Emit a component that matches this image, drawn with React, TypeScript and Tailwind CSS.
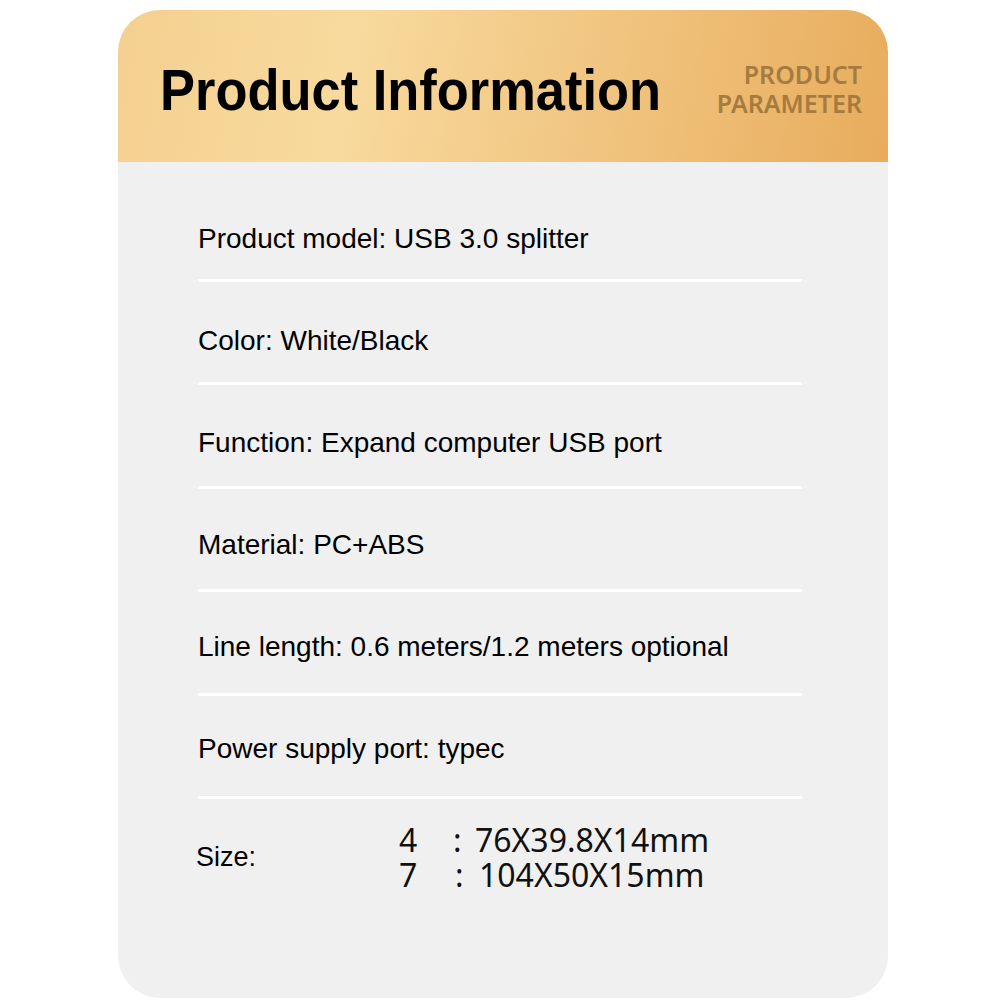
import React from 'react';

// padding under each line grows a little: text pitch is 102px, divider pitch 103.4px
const specs = [
  { text: 'Product model: USB 3.0 splitter', pb: 'pb-[26px]' },
  { text: 'Color: White/Black', pb: 'pb-[27.4px]' },
  { text: 'Function: Expand computer USB port', pb: 'pb-[28.8px]' },
  { text: 'Material: PC+ABS', pb: 'pb-[30.2px]' },
  { text: 'Line length: 0.6 meters/1.2 meters optional', pb: 'pb-[31.6px]' },
  { text: 'Power supply port: typec', pb: 'pb-[33px]' },
];

const sizes = [
  { port: '4', value: '76X39.8X14mm', colonPad: 'pl-0', valuePad: 'pl-0' },
  { port: '7', value: '104X50X15mm', colonPad: 'pl-[2px]', valuePad: 'pl-[4px]' },
];

const App: React.FC = () => {
  return (
    <div className="w-[1000px] h-[1000px] bg-white pt-[10px] pl-[118px]">
      <div className="w-[770px] h-[988px] rounded-[42px] bg-[#f0f0f0] overflow-hidden flex flex-col">
        {/* Header */}
        <div className="h-[152px] shrink-0 flex items-center justify-between pl-[42px] pr-[26px] bg-linear-[100deg] from-[#f4d090] via-[#f8da9e] via-30% to-[#e8ac5d]">
          <h1
            className="text-[57px] leading-none font-bold text-black scale-x-[0.92] origin-left whitespace-nowrap mt-[8px]"
            style={{ fontFamily: '"Liberation Sans", Arial, sans-serif' }}
          >
            Product Information
          </h1>
          <div
            className="text-right text-[25px] leading-[29px] font-semibold text-[#a67b3f] mt-[5px]"
            style={{ fontFamily: '"Noto Sans", sans-serif' }}
          >
            <div>PRODUCT</div>
            <div>PARAMETER</div>
          </div>
        </div>

        {/* Spec list */}
        <div
          className="pt-[16.6px] pl-[80px] w-[684px] text-black"
          style={{ fontFamily: '"Liberation Sans", Arial, sans-serif' }}
        >
          {specs.map((s) => (
            <div key={s.text}>
              <div className={`h-[100.4px] flex items-end ${s.pb} text-[28px] leading-[28px] whitespace-nowrap`}>
                {s.text}
              </div>
              <div className="h-[3px] bg-white" />
            </div>
          ))}

          <div className="flex items-center pt-[23px]">
            <div className="w-[201px] -ml-[2px] text-[27px] leading-[28px]">Size:</div>
            <div
              className="flex flex-col text-[32px] leading-[35px] text-[#111]"
              style={{ fontFamily: '"Noto Sans", sans-serif' }}
            >
              {sizes.map((r) => (
                <div key={r.port} className="flex whitespace-nowrap">
                  <span className="w-[56px] pl-[2px]">{r.port}</span>
                  <span className={`w-[22px] ${r.colonPad}`}>:</span>
                  <span className={r.valuePad}>{r.value}</span>
                </div>
              ))}
            </div>
          </div>
        </div>
      </div>
    </div>
  );
};

export default App;
